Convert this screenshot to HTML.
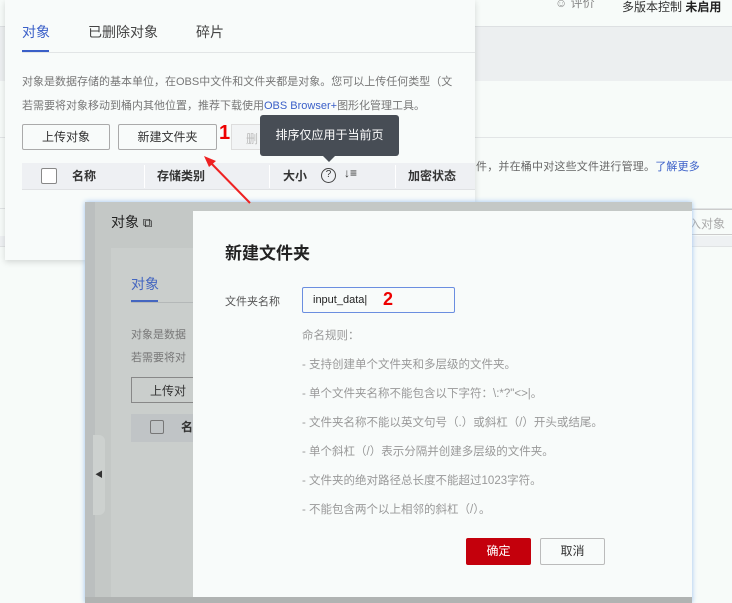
<!DOCTYPE html>
<html><head><meta charset="utf-8"><style>
*{margin:0;padding:0;box-sizing:border-box}
body{width:732px;height:603px;overflow:hidden;position:relative;background:#f7fbf9;font-family:"Liberation Sans","Noto Sans CJK SC",sans-serif;color:#333}
.a{position:absolute;white-space:nowrap}
</style></head><body>
<!-- background page -->
<div class="a" style="left:555px;top:-6px;font-size:12px;color:#888">☺ 评价</div>
<div class="a" style="left:622px;top:-2px;font-size:12px;color:#333">多版本控制 <b style="color:#222">未启用</b></div>
<div class="a" style="left:0;top:26px;width:732px;height:1px;background:#dde0e2"></div>
<div class="a" style="left:0;top:27px;width:732px;height:54px;background:#eceff0"></div>
<div class="a" style="left:0;top:137px;width:732px;height:1px;background:#e2e5e6"></div>
<div class="a" style="left:476px;top:158px;font-size:11px;letter-spacing:.2px;color:#666">件，并在桶中对这些文件进行管理。<span style="color:#3a5fc8">了解更多</span></div>
<div class="a" style="left:0;top:208px;width:732px;height:1px;background:#e0e3e4"></div>
<div class="a" style="left:680px;top:209px;width:60px;height:26px;border:1px solid #ccc;font-size:12px;color:#aaa;padding:5px 0 0 8px">入对象</div>
<div class="a" style="left:0;top:236px;width:732px;height:10px;background:#eef1f3"></div>
<div class="a" style="left:0;top:246px;width:732px;height:1px;background:#e0e3e4"></div>
<div class="a" style="left:12px;top:228px;font-size:12px;color:#555;font-weight:bold">存储类别</div>

<!-- popup card 1 -->
<div class="a" style="left:5px;top:0;width:470px;height:260px;background:#f8fbfa;box-shadow:0 2px 6px rgba(0,0,0,.15);overflow:hidden">
 <div class="a" style="left:17px;top:22px;font-size:14px;color:#3a5fc8">对象</div>
 <div class="a" style="left:83px;top:22px;font-size:14px;color:#444">已删除对象</div>
 <div class="a" style="left:191px;top:22px;font-size:14px;color:#444">碎片</div>
 <div class="a" style="left:17px;top:50px;width:27px;height:2px;background:#3a5fc8"></div>
 <div class="a" style="left:17px;top:52px;width:453px;height:1px;background:#e2e5e6"></div>
 <div class="a" style="left:17px;top:73px;font-size:11px;color:#777">对象是数据存储的基本单位，在OBS中文件和文件夹都是对象。您可以上传任何类型（文</div>
 <div class="a" style="left:17px;top:97px;font-size:11px;color:#777">若需要将对象移动到桶内其他位置，推荐下载使用<span style="color:#3a5fc8">OBS Browser+</span>图形化管理工具。</div>
 <div class="a" style="left:17px;top:124px;width:88px;height:26px;border:1px solid #aaa;border-radius:2px;font-size:12px;text-align:center;line-height:24px">上传对象</div>
 <div class="a" style="left:113px;top:124px;width:99px;height:26px;border:1px solid #aaa;border-radius:2px;font-size:12px;text-align:center;line-height:24px">新建文件夹</div>
 <div class="a" style="left:214px;top:122px;font-size:20px;font-weight:bold;color:#e00">1</div>
 <div class="a" style="left:226px;top:124px;width:40px;height:26px;border:1px solid #ddd;background:#f2f4f5;font-size:12px;color:#bbb;padding:5px 0 0 14px">删</div>
 <div class="a" style="left:17px;top:163px;width:453px;height:27px;background:#eef0f3;border-bottom:1px solid #e0e2e4"></div>
 <div class="a" style="left:36px;top:168px;width:16px;height:16px;border:1px solid #888;background:#fff;border-radius:2px"></div>
 <div class="a" style="left:67px;top:167px;font-size:12px;font-weight:bold;color:#333">名称</div>
 <div class="a" style="left:139px;top:165px;width:1px;height:23px;background:#fff"></div>
 <div class="a" style="left:152px;top:167px;font-size:12px;font-weight:bold;color:#333">存储类别</div>
 <div class="a" style="left:264px;top:165px;width:1px;height:23px;background:#fff"></div>
 <div class="a" style="left:278px;top:167px;font-size:12px;font-weight:bold;color:#333">大小</div>
 <div class="a" style="left:316px;top:168px;width:15px;height:15px;border:1.3px solid #444;border-radius:50%;font-size:10px;text-align:center;line-height:12px">?</div>
 <div class="a" style="left:339px;top:166px;font-size:12px;color:#333">↓≡</div>
 <div class="a" style="left:390px;top:165px;width:1px;height:23px;background:#fff"></div>
 <div class="a" style="left:403px;top:167px;font-size:12px;font-weight:bold;color:#333">加密状态</div>
</div>
<!-- tooltip -->
<div class="a" style="left:260px;top:115px;width:139px;height:41px;background:#474d55;border-radius:3px;color:#fff;font-size:12px;text-align:center;line-height:40px">排序仅应用于当前页</div>
<div class="a" style="left:323px;top:156px;width:0;height:0;border-left:6px solid transparent;border-right:6px solid transparent;border-top:6px solid #474d55"></div>

<!-- second screenshot -->
<div class="a" style="left:85px;top:202px;width:607px;height:401px;background:#c4c8c6;box-shadow:0 0 5px #9cc2f0;overflow:hidden">
 <div class="a" style="left:0;top:0;width:10px;height:401px;background:#bbbfbf"></div>
 <div class="a" style="left:26px;top:10px;font-size:14px;color:#222">对象 <span style="font-size:13px">⧉</span></div>
 <div class="a" style="left:26px;top:46px;width:90px;height:360px;background:#cacecc"></div>
 <div class="a" style="left:46px;top:72px;font-size:14px;color:#4466c0">对象</div>
 <div class="a" style="left:46px;top:98px;width:27px;height:2px;background:#4466c0"></div>
 <div class="a" style="left:46px;top:100px;width:70px;height:1px;background:#b4b8b8"></div>
 <div class="a" style="left:46px;top:124px;font-size:11px;color:#777">对象是数据</div>
 <div class="a" style="left:46px;top:147px;font-size:11px;color:#777">若需要将对</div>
 <div class="a" style="left:46px;top:175px;width:70px;height:26px;border:1px solid #888;font-size:12px;padding:4px 0 0 18px;color:#333">上传对</div>
 <div class="a" style="left:46px;top:212px;width:70px;height:28px;background:#c0c4c6"></div>
 <div class="a" style="left:65px;top:218px;width:14px;height:14px;border:1px solid #777;border-radius:2px"></div>
 <div class="a" style="left:96px;top:216px;font-size:12px;font-weight:bold">名</div>
 <div class="a" style="left:8px;top:233px;width:12px;height:80px;background:#cdd1cf;border-radius:0 6px 6px 0;font-size:8px;color:#333;padding-top:34px;text-align:center">◀</div>
 <div class="a" style="left:0;top:395px;width:607px;height:6px;background:#b0b3b2"></div>
 <!-- modal -->
 <div class="a" style="left:108px;top:9px;width:499px;height:386px;background:#f8fbfa">
  <div class="a" style="left:32px;top:28px;font-size:17px;font-weight:bold;color:#222">新建文件夹</div>
  <div class="a" style="left:32px;top:82px;font-size:11px;color:#555">文件夹名称</div>
  <div class="a" style="left:109px;top:76px;width:153px;height:26px;border:1px solid #6b8ee0;border-radius:2px;font-size:11px;padding:6px 0 0 10px;color:#222">input_data|</div>
  <div class="a" style="left:190px;top:78px;font-size:18px;font-weight:bold;color:#e00">2</div>
  <div class="a" style="left:109px;top:111px;font-size:11.5px;color:#999;line-height:29px">命名规则：<br>- 支持创建单个文件夹和多层级的文件夹。<br>- 单个文件夹名称不能包含以下字符：\:*?"&lt;&gt;|。<br>- 文件夹名称不能以英文句号（.）或斜杠（/）开头或结尾。<br>- 单个斜杠（/）表示分隔并创建多层级的文件夹。<br>- 文件夹的绝对路径总长度不能超过1023字符。<br>- 不能包含两个以上相邻的斜杠（/）。</div>
  <div class="a" style="left:273px;top:327px;width:65px;height:27px;background:#c4000c;border-radius:2px;color:#fff;font-size:12px;text-align:center;line-height:27px">确定</div>
  <div class="a" style="left:347px;top:327px;width:65px;height:27px;border:1px solid #bbb;border-radius:2px;color:#333;font-size:12px;text-align:center;line-height:25px">取消</div>
 </div>
</div>
<svg class="a" style="left:0;top:0" width="732" height="603"><line x1="250" y1="203" x2="208" y2="160" stroke="#e22" stroke-width="2"/><polygon points="204,156 216,161 209,167" fill="#e22"/></svg>
</body></html>
